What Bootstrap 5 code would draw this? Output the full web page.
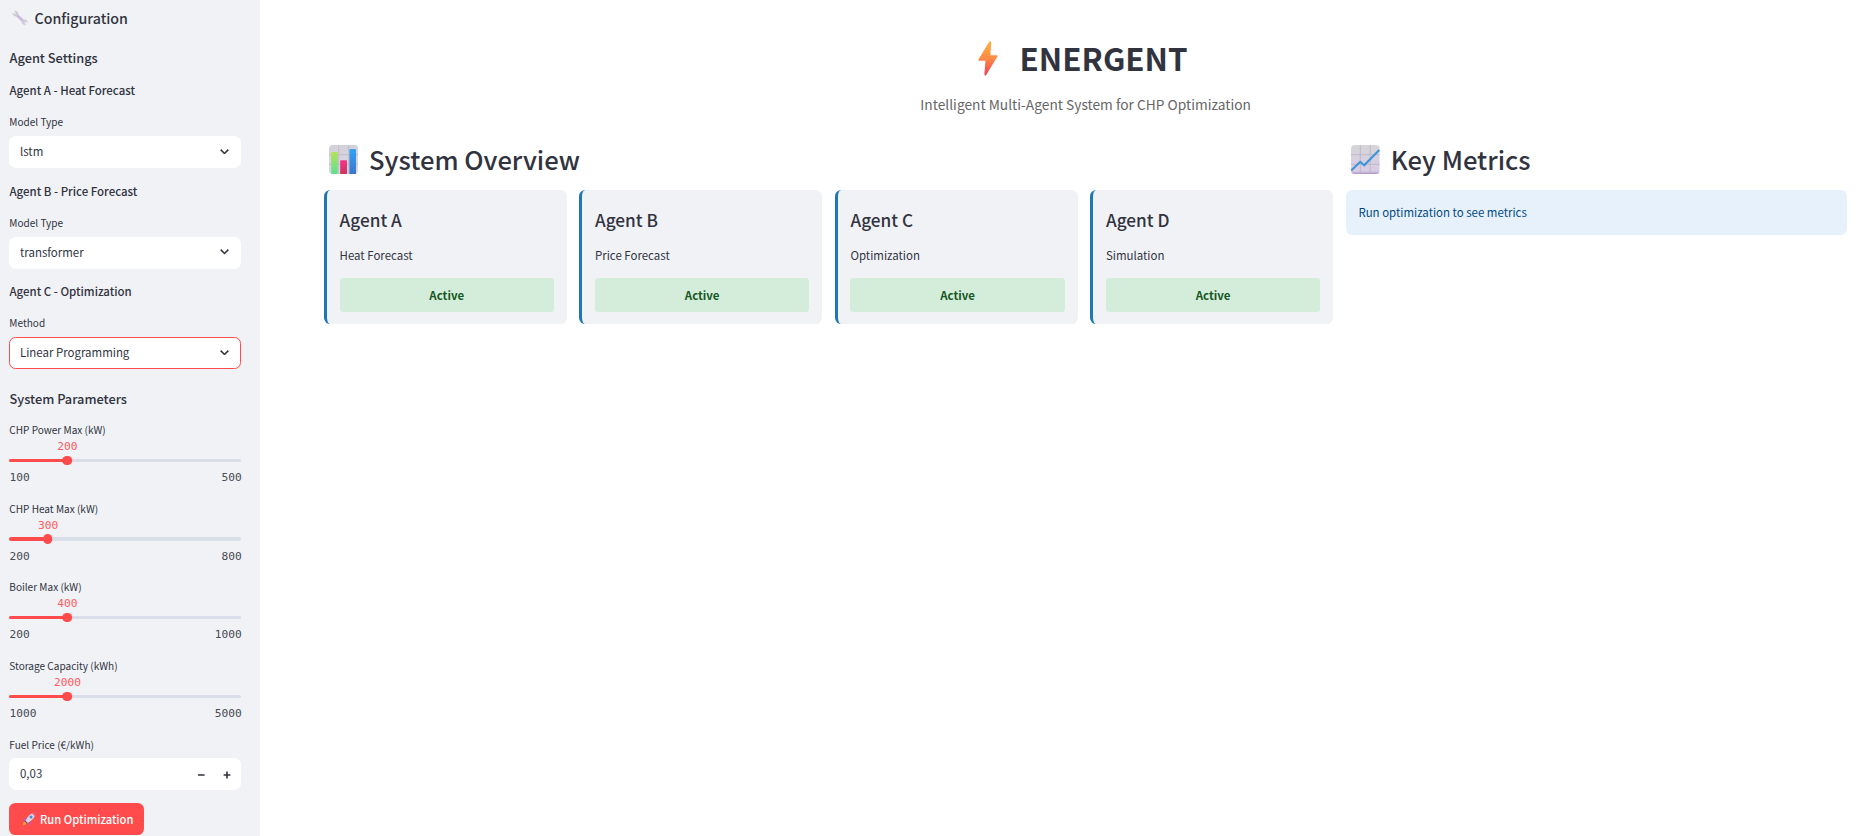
<!DOCTYPE html>
<html lang="en">
<head>
<meta charset="utf-8">
<meta name="viewport" content="width=device-width, initial-scale=1">
<title>ENERGENT</title>
<link rel="stylesheet" href="https://cdn.jsdelivr.net/npm/bootstrap@5.3.0/dist/css/bootstrap.min.css">
<style>
:root{--ink:#31333f;--panel:#f0f2f6;--accent:#ff4b4b}
body{font-family:"Noto Sans CJK SC","Noto Sans",sans-serif;color:var(--ink);font-size:11.46px;background:#fff}
h1,h2,h3,h4,p,label{margin:0;white-space:nowrap}
.sidebar{width:260px;background:var(--panel);padding:0 19px 0 9px;height:836px;overflow:hidden}
.side-title{font-size:14.2px;line-height:36px;font-weight:500}
.side-title svg{margin:0 6.6px 0 3px}
.side-head{font-size:12.8px;line-height:20px;font-weight:500;padding-left:.5px;margin-top:12px}
.params{margin-top:20px}
.agent-head{font-size:11.46px;line-height:20px;font-weight:500;padding-left:.5px;margin-top:12.5px}
.side-head + .agent-head{margin-top:12px}
.field-label{display:block;font-size:10.06px;line-height:16px;padding-left:.3px}
.agent-head + .field-label{margin-top:14px}
.field{height:32px;background:#fff;border:1px solid #fff;border-radius:6.4px;margin-top:6px;padding:0 11px 2px 10px;line-height:28px}
.field.active{border-color:var(--accent)}
.field use{transform:translateY(.5px)}
.slider{margin-top:13px}
.slider + .slider,.fuel{margin-top:15.7px}
.mono{font-family:"DejaVu Sans Mono",monospace;font-size:11.2px;line-height:18px;color:#484a55}
.value-row{height:16px}
.value-row span{display:inline-block;transform:translateX(-50%);color:#ff5c5e}
.track{height:3.2px;border-radius:3px;margin:4.8px 0 7px;background:#d9dee9;position:relative}
.fill{height:100%;background:var(--accent);border-radius:3px}
.thumb{position:absolute;top:-3.3px;width:9.6px;height:9.6px;border-radius:50%;background:var(--accent);transform:translateX(-50%)}
.limits{height:16px;padding-left:.5px;margin-right:-.7px}
.fuel + .field{margin-top:5px;line-height:28px;padding-right:9px}
.run{width:135px;height:32px;margin-top:13px;background:var(--accent);color:#fff;border:0;border-radius:6.4px;font-size:11.2px;font-weight:500;line-height:32px;padding:0 0 0 13px}
.run svg{margin-right:4px}
main{padding:0 12.8px 0 64px}
.brand{font-size:31.3px;font-weight:700;line-height:50px;margin-top:33px;padding-right:6px}
.brand svg{margin-right:22px}
.tagline{font-size:13.75px;line-height:24px;color:#666;margin-top:9px}
.columns{display:grid;grid-template-columns:minmax(0,1009px) minmax(0,1fr);gap:12.8px;margin-top:22.7px}
.section-head{font-size:25.6px;font-weight:500;line-height:40px;margin-bottom:11.3px}
.section-head svg{margin:1px 11px 0 5px}
.agents{display:grid;grid-template-columns:repeat(4,minmax(0,1fr));gap:12.8px}
.agent{height:133.6px;background:var(--panel);border-left:3.2px solid #1f77b4;border-radius:6.4px;padding:18.5px 12.8px 0 12.6px}
.agent h3{font-size:17.2px;font-weight:500;line-height:24px}
.agent p{line-height:20px;margin-top:12.5px}
.state{height:34px;line-height:34.6px;background:#d4edda;color:#155724;font-weight:700;border-radius:3.2px;margin-top:13px}
.notice{height:44.8px;line-height:44.6px;padding-left:12.6px;border-radius:6.4px;background:#e7f1fc;color:#004a80}
</style>
</head>
<body>
<svg width="0" height="0" class="position-absolute" aria-hidden="true">
<defs>
<linearGradient id="bolt" x1="0" y1="0" x2="0" y2="1"><stop offset="0" stop-color="#fbb03f"/><stop offset=".5" stop-color="#fd8b45"/><stop offset="1" stop-color="#ee3f57"/></linearGradient>
<linearGradient id="paper" x1="0" y1="0" x2="0" y2="1"><stop offset="0" stop-color="#d5d5d9"/><stop offset=".9" stop-color="#d9cce6"/><stop offset="1" stop-color="#ab92c3"/></linearGradient>
<linearGradient id="paper2" x1="0" y1="0" x2="0" y2="1"><stop offset="0" stop-color="#d3d1d9"/><stop offset="1" stop-color="#dcd5e6"/></linearGradient>
<linearGradient id="green" x1="0" y1="0" x2="0" y2="1"><stop offset="0" stop-color="#b2e257"/><stop offset="1" stop-color="#60e08e"/></linearGradient>
<linearGradient id="pink" x1="0" y1="0" x2="0" y2="1"><stop offset="0" stop-color="#f23783"/><stop offset="1" stop-color="#cf3260"/></linearGradient>
<linearGradient id="blue" x1="0" y1="0" x2="0" y2="1"><stop offset="0" stop-color="#30a5f5"/><stop offset="1" stop-color="#3c75ca"/></linearGradient>
<symbol id="chevron" viewBox="0 0 8 5"><path d="M.6.6 4 4 7.4.6" fill="none" stroke="#31333f" stroke-width="1.35"/></symbol>
</defs>
</svg>
<div class="d-flex">
<aside class="sidebar flex-shrink-0">
  <h2 class="side-title d-flex align-items-center"><svg width="16" height="16" viewBox="0 0 16 16"><path d="M4.3 4.5 11.8 11.7" stroke="#cbb9df" stroke-width="2.8"/><path d="M2.4 1.2 3.9 2.8 3.4 4 2.2 4.3.8 2.9C.6 5.2 2.5 6.6 4.5 6L6.2 4.4C6.6 2.3 4.6.6 2.4 1.2Z" fill="#d1cbd6" stroke="#d1cbd6" stroke-width=".5"/><path d="M10 11.5 11.7 9.8C13.7 9.2 15.6 10.6 15.3 12.8L14 11.6 12.8 12 12.4 13.3 13.8 14.6C11.5 15.2 9.7 13.6 10 11.5Z" fill="#d1cbd6" stroke="#d1cbd6" stroke-width=".5"/></svg>Configuration</h2>
  <h3 class="side-head">Agent Settings</h3>
  <h4 class="agent-head">Agent A - Heat Forecast</h4>
  <label class="field-label">Model Type</label>
  <div class="field d-flex align-items-center justify-content-between"><span>lstm</span><svg width="9" height="6.6"><use href="#chevron"/></svg></div>
  <h4 class="agent-head">Agent B - Price Forecast</h4>
  <label class="field-label">Model Type</label>
  <div class="field d-flex align-items-center justify-content-between"><span>transformer</span><svg width="9" height="6.6"><use href="#chevron"/></svg></div>
  <h4 class="agent-head">Agent C - Optimization</h4>
  <label class="field-label">Method</label>
  <div class="field active d-flex align-items-center justify-content-between"><span>Linear Programming</span><svg width="9" height="6.6"><use href="#chevron"/></svg></div>
  <h3 class="side-head params">System Parameters</h3>
  <div class="slider"><label class="field-label">CHP Power Max (kW)</label>
    <div class="mono value-row"><span style="margin-left:25.2%">200</span></div>
    <div class="track"><div class="fill" style="width:25%"></div><div class="thumb" style="left:25%"></div></div>
    <div class="mono limits d-flex justify-content-between"><span>100</span><span>500</span></div></div>
  <div class="slider"><label class="field-label">CHP Heat Max (kW)</label>
    <div class="mono value-row"><span style="margin-left:16.87%">300</span></div>
    <div class="track"><div class="fill" style="width:16.67%"></div><div class="thumb" style="left:16.67%"></div></div>
    <div class="mono limits d-flex justify-content-between"><span>200</span><span>800</span></div></div>
  <div class="slider"><label class="field-label">Boiler Max (kW)</label>
    <div class="mono value-row"><span style="margin-left:25.2%">400</span></div>
    <div class="track"><div class="fill" style="width:25%"></div><div class="thumb" style="left:25%"></div></div>
    <div class="mono limits d-flex justify-content-between"><span>200</span><span>1000</span></div></div>
  <div class="slider"><label class="field-label">Storage Capacity (kWh)</label>
    <div class="mono value-row"><span style="margin-left:25.2%">2000</span></div>
    <div class="track"><div class="fill" style="width:25%"></div><div class="thumb" style="left:25%"></div></div>
    <div class="mono limits d-flex justify-content-between"><span>1000</span><span>5000</span></div></div>
  <label class="field-label fuel">Fuel Price (€/kWh)</label>
  <div class="field d-flex align-items-center"><span class="me-auto">0,03</span><svg width="33" height="8" viewBox="0 0 33 8" class="mt-1"><path d="M0 4h6.6M25.6 4h6.8M29 .6v6.8" stroke="#31333f" stroke-width="1.6"/></svg></div>
  <button class="btn run d-flex align-items-center" type="button"><svg width="14" height="14" viewBox="0 0 14 14"><path d="M4.3 5.1 1.6 6.2.8 8.9 4.8 8.8ZM8.9 9.2 8.7 12 6.4 13.2 5 9.5Z" fill="#c65b8c"/><path d="M3.5 9.2C6 3.5 9 .8 13.1 1 13.1 5.5 10.3 8.7 5.2 11Z" fill="#ddd2e7"/><path d="M10.2 1.5 13.1 1 12.7 4Z" fill="#e5486c"/><path d="M3.5 8.8 5.4 10.8 4.2 12 2.2 10Z" fill="#4d5184"/><path d="M2.6 9.5 4.5 11.3C3.7 13 2.2 13.4.7 13.3.8 11.6 1.1 10.3 2.6 9.5Z" fill="#f99b2d"/><circle cx="9" cy="5" r="1.5" fill="#4292cf"/></svg>Run Optimization</button>
</aside>
<main class="flex-grow-1">
  <h1 class="brand d-flex align-items-center justify-content-center"><svg width="20" height="35" viewBox="0 0 20 35" class="flex-shrink-0"><path d="M11.2.7Q11.5.2 12.6.4 13.3.6 13.2 1.4L12.4 14.2H18.8Q20.1 14.3 19.4 15.6L8.3 33.8Q7.8 34.6 7 34.4 6.3 34.2 6.4 33.3L7.4 19.7H1.1Q0 19.4.6 18.2Z" fill="url(#bolt)"/></svg>ENERGENT</h1>
  <p class="tagline text-center">Intelligent Multi-Agent System for CHP Optimization</p>
  <div class="columns">
    <section>
      <h2 class="section-head d-flex align-items-center"><svg width="29" height="29" viewBox="0 0 29 29"><rect width="29" height="29" rx="3.5" fill="url(#paper2)"/><path d="M0 9.7H29M0 19.3H29M9.7 0V29M19.7 0V29" stroke="#bdb8c4" stroke-width=".8"/><path d="M2.2 7.8Q2.2 7 3 7H8Q8.8 7 8.8 7.8V29H2.2Z" fill="url(#green)"/><path d="M11.2 16Q11.2 15.2 12 15.2H17.2Q18 15.2 18 16V29H11.2Z" fill="url(#pink)"/><path d="M20.4 4.8Q20.4 4 21.2 4H26.2Q27 4 27 4.8V29H20.4Z" fill="url(#blue)"/></svg>System Overview</h2>
      <div class="agents">
        <article class="agent"><h3>Agent A</h3><p>Heat Forecast</p><div class="state text-center">Active</div></article>
        <article class="agent"><h3>Agent B</h3><p>Price Forecast</p><div class="state text-center">Active</div></article>
        <article class="agent"><h3>Agent C</h3><p>Optimization</p><div class="state text-center">Active</div></article>
        <article class="agent"><h3>Agent D</h3><p>Simulation</p><div class="state text-center">Active</div></article>
      </div>
    </section>
    <section>
      <h2 class="section-head d-flex align-items-center"><svg width="29" height="29" viewBox="0 0 29 29"><rect width="28.6" height="29" rx="3.5" fill="url(#paper)"/><path d="M0 9.7H28.6M0 19.3H28.6M9.3 0V28M19.2 0V28" stroke="#b9b4c0" stroke-width=".8"/><path d="M.2 25.4 9.2 16.8 13.2 20.2 28.3 5" fill="none" stroke="#3b93d8" stroke-width="2.1"/></svg>Key Metrics</h2>
      <div class="notice">Run optimization to see metrics</div>
    </section>
  </div>
</main>
</div>
<script src="https://cdn.jsdelivr.net/npm/bootstrap@5.3.0/dist/js/bootstrap.bundle.min.js"></script>
</body>
</html>
